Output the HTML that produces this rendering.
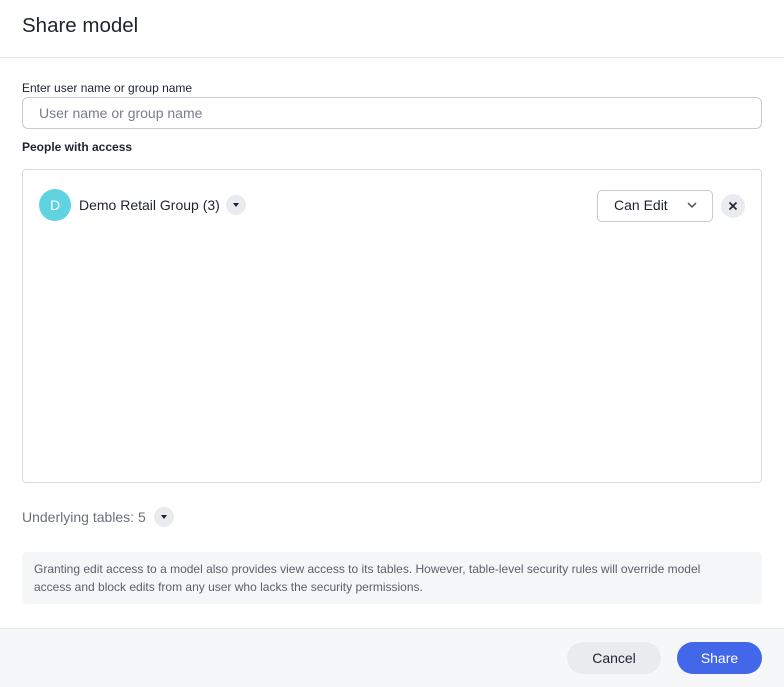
<!DOCTYPE html>
<html><head><meta charset="utf-8"><style>
*{box-sizing:border-box;margin:0;padding:0}
body{width:784px;height:687px;background:#fff;font-family:"Liberation Sans",sans-serif;color:#1d232f;position:relative;overflow:hidden}
.a{position:absolute}
</style></head><body>
<div class="a" style="left:22px;top:13px;font-size:20.5px;line-height:26px;color:#1d232f">Share model</div>
<div class="a" style="left:0;top:57px;width:784px;height:1px;background:#e4e6ea"></div>
<div class="a" style="left:22px;top:81px;font-size:12px;line-height:15px;color:#1d232f">Enter user name or group name</div>
<div class="a" style="left:22px;top:97px;width:740px;height:32px;border:1px solid #c7cbd3;border-radius:6px;font-size:14px;line-height:30px;padding-left:16px;color:#777e8b">User name or group name</div>
<div class="a" style="left:22px;top:140px;font-size:12px;line-height:15px;font-weight:bold;color:#1d232f">People with access</div>
<div class="a" style="left:22px;top:169px;width:740px;height:314px;border:1px solid #d8dbe0;border-radius:4px"></div>
<div class="a" style="left:39px;top:189px;width:32px;height:32px;border-radius:50%;background:#5fd3e0;color:#fff;font-size:14px;line-height:32px;text-align:center">D</div>
<div class="a" style="left:79px;top:196px;font-size:14px;line-height:18px">Demo Retail Group (3)</div>
<div class="a" style="left:226px;top:195px;width:20px;height:20px;border-radius:50%;background:#eaebef"></div>
<div class="a" style="left:233px;top:203px;width:0;height:0;border-left:3px solid transparent;border-right:3px solid transparent;border-top:4px solid #1d232f"></div>
<div class="a" style="left:597px;top:190px;width:116px;height:32px;border:1px solid #c7cbd3;border-radius:5px"></div>
<div class="a" style="left:614px;top:196px;font-size:14px;line-height:18px">Can Edit</div>
<svg class="a" style="left:686px;top:200px" width="12" height="10"><path d="M2 3l4 4 4-4" stroke="#4a505c" stroke-width="1.5" fill="none"/></svg>
<div class="a" style="left:721px;top:194px;width:24px;height:24px;border-radius:50%;background:#eaebef"></div>
<svg class="a" style="left:727px;top:200px" width="12" height="12"><path d="M2.5 2.5l7 7M9.5 2.5l-7 7" stroke="#1d232f" stroke-width="1.6"/></svg>
<div class="a" style="left:22px;top:508px;font-size:14px;line-height:18px;color:#6a707c">Underlying tables: 5</div>
<div class="a" style="left:154px;top:507px;width:20px;height:20px;border-radius:50%;background:#eaebef"></div>
<div class="a" style="left:161px;top:515px;width:0;height:0;border-left:3px solid transparent;border-right:3px solid transparent;border-top:4px solid #1d232f"></div>
<div class="a" style="left:22px;top:552px;width:740px;height:52px;background:#f5f6f8;border-radius:5px;padding:8px 40px 8px 12px;font-size:12px;line-height:18px;color:#5a606c">Granting edit access to a model also provides view access to its tables. However, table-level security rules will override model access and block edits from any user who lacks the security permissions.</div>
<div class="a" style="left:0;top:628px;width:784px;height:59px;background:#f6f7f9;border-top:1px solid #e4e6ea"></div>
<div class="a" style="left:567px;top:642px;width:94px;height:32px;border-radius:16px;background:#eaebef;font-size:14px;line-height:32px;text-align:center;color:#1d232f">Cancel</div>
<div class="a" style="left:677px;top:642px;width:85px;height:32px;border-radius:16px;background:#4267e8;font-size:14px;line-height:32px;text-align:center;color:#fff">Share</div>
</body></html>
